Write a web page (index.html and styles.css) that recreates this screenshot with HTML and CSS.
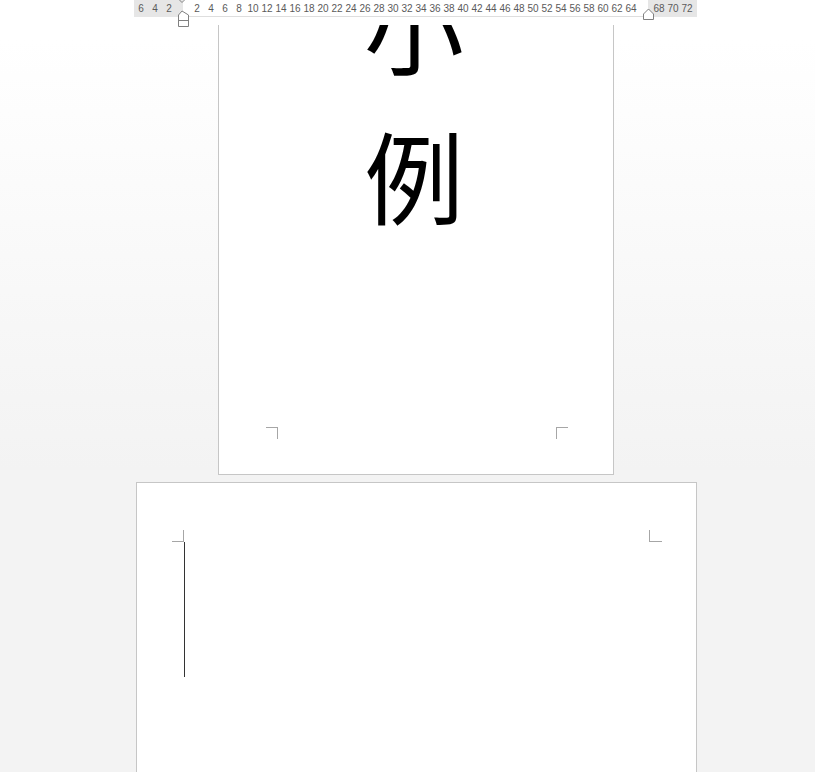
FILE: index.html
```html
<!DOCTYPE html>
<html lang="zh">
<head>
<meta charset="utf-8">
<title>文档</title>
<link rel="stylesheet" href="styles.css">
</head>
<body>
<header class="topbar">
  <div class="ruler">
    <span class="tick">6</span><span class="tick">4</span><span class="tick">2</span><span class="tick"></span><span class="tick">2</span><span class="tick">4</span><span class="tick">6</span><span class="tick">8</span><span class="tick">10</span><span class="tick">12</span><span class="tick">14</span><span class="tick">16</span><span class="tick">18</span><span class="tick">20</span><span class="tick">22</span><span class="tick">24</span><span class="tick">26</span><span class="tick">28</span><span class="tick">30</span><span class="tick">32</span><span class="tick">34</span><span class="tick">36</span><span class="tick">38</span><span class="tick">40</span><span class="tick">42</span><span class="tick">44</span><span class="tick">46</span><span class="tick">48</span><span class="tick">50</span><span class="tick">52</span><span class="tick">54</span><span class="tick">56</span><span class="tick">58</span><span class="tick">60</span><span class="tick">62</span><span class="tick">64</span><span class="tick"></span><span class="tick">68</span><span class="tick">70</span><span class="tick">72</span>
    <svg class="marker marker-left" width="12" height="27" viewBox="0 0 12 27">
      <polyline points="1.5,0 4,2.5 6.5,0" fill="none" stroke="#808080" stroke-width="1"/>
      <path d="M4 11 L0.5 15 L0.5 26.5 L10.5 26.5 L10.5 15 Z" fill="#fff" stroke="#808080" stroke-width="1"/>
      <line x1="0.5" y1="20.5" x2="10.5" y2="20.5" stroke="#808080" stroke-width="1"/>
    </svg>
    <svg class="marker marker-right" width="12" height="20" viewBox="0 0 12 20">
      <path d="M5.5 9 L0.5 14 L0.5 19.5 L10.5 19.5 L10.5 14 Z" fill="#fff" stroke="#808080" stroke-width="1"/>
    </svg>
  </div>
</header>
<main class="doc">
  <section class="page page-first">
    <div class="text-area">
      <p class="big">小</p>
      <p class="big">例</p>
    </div>
    <div class="marks marks-bottom">
      <span class="mark mark-bl"></span>
      <span class="mark mark-br"></span>
    </div>
  </section>
  <section class="page page-second">
    <div class="marks marks-top">
      <span class="mark mark-tl"></span>
      <span class="mark mark-tr"></span>
    </div>
    <div class="text-area-2">
      <span class="caret"></span>
    </div>
  </section>
</main>
</body>
</html>
```

FILE: styles.css
```css
html, body {
  margin: 0;
  padding: 0;
}
body {
  width: 815px;
  height: 772px;
  overflow: hidden;
  background: linear-gradient(to bottom, #ffffff 40px, #f3f3f3 470px, #f3f3f3 100%);
  font-family: "Liberation Sans", Arial, sans-serif;
}
.topbar {
  position: relative;
  z-index: 2;
  height: 25px;
  background: #ffffff;
}
.ruler {
  position: relative;
  margin-left: 134px;
  width: 563px;
  height: 17px;
  display: flex;
  background:
    linear-gradient(#dedede, #dedede) 49px 16px / 465px 1px no-repeat,
    linear-gradient(to right, #e6e6e6 0 49px, #ffffff 49px 514px, #e6e6e6 514px 563px);
}
.tick {
  flex: 0 0 14px;
  width: 14px;
  overflow: hidden;
  text-align: center;
  font-size: 10px;
  line-height: 17px;
  color: #5a5a5a;
  white-space: nowrap;
}
.marker {
  position: absolute;
  top: 0;
  display: block;
}
.marker-left {
  left: 44px;
}
.marker-right {
  left: 509px;
}
.doc {
  display: flex;
  flex-direction: column;
  align-items: flex-start;
}
.page {
  background: #ffffff;
  box-sizing: border-box;
  border: 1px solid #c6c6c6;
  overflow: hidden;
  display: flex;
  flex-direction: column;
}
.page-first {
  margin-left: 218px;
  width: 396px;
  height: 450px;
  border-top: none;
}
.text-area {
  height: 402px;
  overflow: hidden;
  padding: 0 59px 0 55px;
  flex: 0 0 auto;
}
.big {
  margin: 0;
  font-family: "Noto Sans CJK SC", "Noto Sans CJK JP", sans-serif;
  font-size: 100px;
  line-height: 150px;
  height: 150px;
  text-align: center;
  color: #000;
}
.big:first-child {
  margin-top: -76px;
}
.marks {
  display: flex;
  justify-content: space-between;
  flex: 0 0 auto;
}
.mark {
  display: block;
  width: 12px;
  height: 12px;
  box-sizing: border-box;
  border: 0 solid #a6a6a6;
}
.marks-bottom {
  padding: 0 45px 0 47px;
}
.mark-bl {
  border-top-width: 1px;
  border-right-width: 1px;
}
.mark-br {
  border-top-width: 1px;
  border-left-width: 1px;
}
.page-second {
  margin-top: 7px;
  margin-left: 136px;
  width: 561px;
  height: 400px;
}
.marks-top {
  padding: 47px 34px 0 35px;
}
.mark-tl {
  border-right-width: 1px;
  border-bottom-width: 1px;
}
.mark-tr {
  width: 13px;
  border-left-width: 1px;
  border-bottom-width: 1px;
}
.text-area-2 {
  padding-left: 47px;
}
.caret {
  display: block;
  width: 1px;
  height: 135px;
  background: #333333;
}
```
